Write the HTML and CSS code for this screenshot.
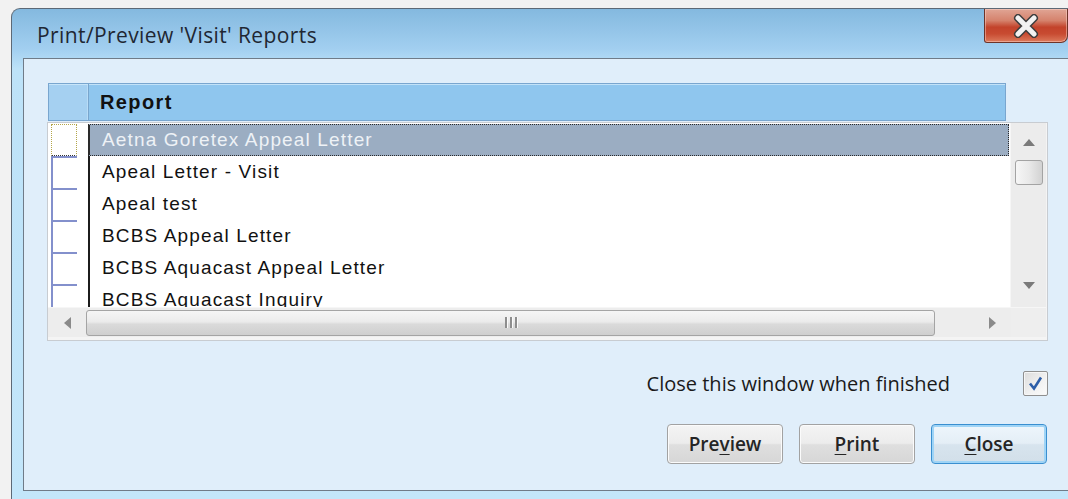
FILE: index.html
```html
<!DOCTYPE html>
<html lang="en">
<head>
<meta charset="utf-8">
<title>Print/Preview 'Visit' Reports</title>
<link rel="stylesheet" href="styles.css">
</head>
<body>
<div class="window">
  <div class="titlebar">
    <span class="title">Print/Preview 'Visit' Reports</span>
    <div class="close-x" aria-label="Close">
      <svg width="28" height="24" viewBox="0 0 28 24">
        <path d="M6 4 L22 20 M22 4 L6 20" stroke="#3d3d3d" stroke-width="8" stroke-linecap="round" fill="none"/>
        <path d="M6 4 L22 20 M22 4 L6 20" stroke="#f2f2f2" stroke-width="5" stroke-linecap="round" fill="none"/>
      </svg>
    </div>
  </div>
  <div class="client">
    <div class="content">
      <div class="grid">
        <div class="grid-head">
          <div class="sel-head"></div>
          <div class="col-head">Report</div>
        </div>
        <div class="grid-body">
          <div class="rows-area">
            <div class="rows">
              <div class="row selected"><div class="sel"><span class="box focus"></span></div><div class="cell">Aetna Goretex Appeal Letter</div></div>
              <div class="row"><div class="sel"><span class="box"></span></div><div class="cell">Apeal Letter - Visit</div></div>
              <div class="row"><div class="sel"><span class="box"></span></div><div class="cell">Apeal test</div></div>
              <div class="row"><div class="sel"><span class="box"></span></div><div class="cell">BCBS Appeal Letter</div></div>
              <div class="row"><div class="sel"><span class="box"></span></div><div class="cell">BCBS Aquacast Appeal Letter</div></div>
              <div class="row"><div class="sel"><span class="box"></span></div><div class="cell">BCBS Aquacast Inquiry</div></div>
            </div>
            <div class="vscroll">
              <div class="arrow-btn up">
                <svg width="12" height="7" viewBox="0 0 12 7"><path d="M0 7 L6 0 L12 7 Z" fill="#7a7a7a"/></svg>
              </div>
              <div class="vthumb"></div>
              <div class="vtrack"></div>
              <div class="arrow-btn down">
                <svg width="12" height="7" viewBox="0 0 12 7"><path d="M0 0 L12 0 L6 7 Z" fill="#7a7a7a"/></svg>
              </div>
            </div>
          </div>
          <div class="hscroll-row">
            <div class="hscroll">
              <div class="harrow">
                <svg width="7" height="12" viewBox="0 0 7 12"><path d="M7 0 L7 12 L0 6 Z" fill="#8a8a8a"/></svg>
              </div>
              <div class="hthumb">
                <span class="grip"><i></i><i></i><i></i></span>
              </div>
              <div class="htrack"></div>
              <div class="harrow">
                <svg width="7" height="12" viewBox="0 0 7 12"><path d="M0 0 L7 6 L0 12 Z" fill="#8a8a8a"/></svg>
              </div>
            </div>
            <div class="corner"></div>
          </div>
        </div>
      </div>

      <div class="option-row">
        <span class="option-label">Close this window when finished</span>
        <span class="checkbox">
          <svg width="17" height="17" viewBox="0 0 17 17"><path d="M3 8.5 L7 13.5 L14 2.5" stroke="#2d5ea8" stroke-width="2.6" fill="none" stroke-linejoin="miter"/></svg>
        </span>
      </div>

      <div class="buttons">
        <button class="btn">Pre<u>v</u>iew</button>
        <button class="btn"><u>P</u>rint</button>
        <button class="btn default"><u>C</u>lose</button>
      </div>
    </div>
  </div>
</div>
</body>
</html>
```
FILE: styles.css
```css
html, body {
  margin: 0;
  padding: 0;
}

body {
  background: #f2f2f2;
  width: 1068px;
  height: 499px;
  overflow: hidden;
  padding: 8px 0 0 11px;
  box-sizing: border-box;
}

/* window frame */
.window {
  width: 1057px;
  border-left: 1px solid #5d6976;
  border-top: 1px solid #5d6976;
  border-top-left-radius: 9px;
  background: linear-gradient(180deg, #84b9df 0px, #a2cff0 40px, #bde2f8 60px, #c3e6fa 100%);
  padding: 0 0 9px 11px;
  box-sizing: border-box;
}

.titlebar {
  height: 49px;
  display: flex;
  align-items: flex-start;
  justify-content: space-between;
}

.title {
  font-family: "Open Sans", "Noto Sans", sans-serif;
  font-size: 21px;
  letter-spacing: 0.4px;
  color: #1f2733;
  margin: 12px 0 0 14px;
}

.close-x {
  width: 84px;
  height: 34px;
  box-sizing: border-box;
  border: 1px solid #6e3328;
  border-top: none;
  border-radius: 0 0 7px 3px;
  background: linear-gradient(180deg, #e0a595 0%, #d5826c 35%, #c3432b 55%, #c84b31 75%, #dc7a5c 100%);
  box-shadow: inset 0 0 0 1px rgba(255, 220, 210, 0.45);
  display: flex;
  align-items: center;
  justify-content: center;
}

/* client area */
.client {
  border-top: 1px solid #6f7b88;
  border-left: 1px solid #6f7b88;
  border-bottom: 1px solid #6f7b88;
  background: #e0eefa;
  height: 433px;
  box-sizing: border-box;
  padding: 24px 0 0 23px;
}

.content {
  width: 1001px;
}

/* grid */
.grid-head {
  display: flex;
  width: 958px;
  height: 38px;
  margin-left: 1px;
  box-sizing: border-box;
  border: 1px solid #79a6cf;
  background: #8fc6ee;
  box-shadow: inset 0 1px 0 #c2e2f8;
}

.sel-head {
  width: 39px;
  background: #a5d0f1;
  border-right: 1px solid #78a5cd;
  box-shadow: inset 0 1px 0 #c8e5f9, inset -1px 0 0 #b9dcf6;
}

.col-head {
  font-family: "Liberation Sans", Arial, sans-serif;
  font-weight: bold;
  font-size: 20px;
  letter-spacing: 1.4px;
  color: #111;
  padding: 7px 0 0 11px;
}

.grid-body {
  margin-top: 1px;
  border: 1px solid #c8ccd1;
  background: #f4f4f4;
  padding: 0 1px 4px 0;
  height: 219px;
  box-sizing: border-box;
}

.rows-area {
  display: flex;
  height: 184px;
}

.rows {
  width: 964px;
  background: #fff;
  padding-top: 1px;
  overflow: hidden;
}

.row {
  display: flex;
  height: 32px;
}

.sel {
  width: 40px;
  flex: none;
  padding-left: 3px;
  box-sizing: border-box;
}

.box {
  display: block;
  width: 26px;
  height: 32px;
  box-sizing: border-box;
  border-left: 2px solid #8390cc;
  border-top: 2px solid #8390cc;
  background: #fff;
}

.box.focus {
  border: 1px dotted #b4a64a;
  border-bottom-color: #333;
}

.cell {
  flex: 1;
  border-left: 2px solid #1c1c1c;
  font-family: "Liberation Sans", Arial, sans-serif;
  font-size: 19px;
  letter-spacing: 1.15px;
  color: #111;
  padding-left: 12px;
  line-height: 32px;
  white-space: nowrap;
}

.row.selected .cell {
  background: #9badc2;
  color: #eef2f6;
  border: 1px dotted #2a2a2a;
  border-left: 2px solid #2a2a2a;
  line-height: 30px;
  margin-right: 1px;
}

/* scrollbars */
.vscroll {
  width: 35px;
  background: #ececec;
  border-left: 1px solid #f6f6f6;
  display: flex;
  flex-direction: column;
  align-items: center;
}

.arrow-btn {
  display: flex;
  align-items: center;
  justify-content: center;
  flex: none;
}

.arrow-btn.up {
  height: 37px;
  padding-top: 2px;
  box-sizing: border-box;
}

.arrow-btn.down {
  height: 38px;
  padding-bottom: 6px;
  box-sizing: border-box;
}

.vthumb {
  width: 28px;
  height: 25px;
  box-sizing: border-box;
  border: 1px solid #a3a3a3;
  border-radius: 3px;
  background: linear-gradient(90deg, #f6f6f6 0%, #e9e9e9 50%, #d2d2d2 100%);
  flex: none;
}

.vtrack {
  flex: 1;
}

.hscroll-row {
  display: flex;
  height: 29px;
  border-top: 1px solid #f6f6f6;
}

.hscroll {
  width: 964px;
  display: flex;
  align-items: center;
  background: #ededed;
}

.harrow {
  width: 38px;
  display: flex;
  justify-content: center;
  flex: none;
}

.hthumb {
  width: 849px;
  height: 26px;
  box-sizing: border-box;
  border: 1px solid #a4a4a4;
  border-radius: 3px;
  background: linear-gradient(180deg, #f5f5f5 0%, #ebebeb 45%, #dadada 55%, #cfcfcf 100%);
  display: flex;
  align-items: center;
  justify-content: center;
  flex: none;
}

.grip {
  display: flex;
  gap: 3px;
}

.grip i {
  display: block;
  width: 2px;
  height: 11px;
  background: #8e8e8e;
  box-shadow: 1px 0 0 #fafafa;
}

.htrack {
  flex: 1;
}

.corner {
  width: 35px;
  background: #eeeeee;
}

/* option row */
.option-row {
  display: flex;
  justify-content: flex-end;
  align-items: center;
  margin-top: 30px;
  height: 25px;
}

.option-label {
  font-family: "Open Sans", "Noto Sans", sans-serif;
  font-size: 20px;
  color: #1a1a1a;
  margin-right: 73px;
}

.checkbox {
  width: 25px;
  height: 25px;
  box-sizing: border-box;
  border: 1px solid #8f8f8f;
  border-radius: 2px;
  background: linear-gradient(135deg, #dcdcdc 0%, #f2f2f2 60%, #fbfbfb 100%);
  box-shadow: inset 0 0 0 1px #f6f6f6;
  display: flex;
  align-items: center;
  justify-content: center;
}

/* buttons */
.buttons {
  display: flex;
  justify-content: flex-end;
  gap: 16px;
  margin-top: 28px;
  padding-right: 1px;
}

.btn {
  width: 116px;
  height: 40px;
  box-sizing: border-box;
  border: 1px solid #a2a2a2;
  border-radius: 4px;
  background: linear-gradient(180deg, #f4f4f4 0%, #ececec 48%, #dfdfdf 52%, #d6d6d6 100%);
  box-shadow: inset 0 0 0 1px #fbfbfb;
  font-family: "Open Sans", "Noto Sans", sans-serif;
  font-weight: 600;
  font-size: 19px;
  color: #252525;
  padding: 0;
}

.btn u {
  text-underline-offset: 3px;
}

.btn.default {
  border: 1px solid #3a8fd0;
  box-shadow: inset 0 0 0 2px #9fd4f6;
  background: linear-gradient(180deg, #eef6fc 0%, #e4eef6 48%, #d7e4ee 52%, #d2dfe9 100%);
}
```
